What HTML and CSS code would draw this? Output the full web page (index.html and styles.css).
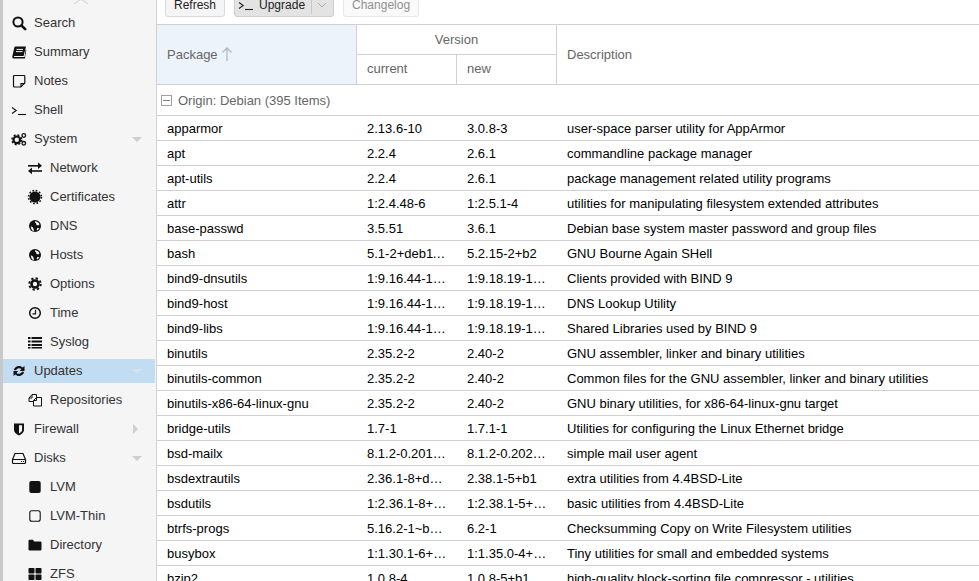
FILE: index.html
```html
<!DOCTYPE html>
<html lang="en">
<head>
<meta charset="utf-8">
<title>Updates</title>
<link rel="stylesheet" href="styles.css">
</head>
<body>
<svg class="defs" width="0" height="0" aria-hidden="true">
  <symbol id="i-search" viewBox="0 0 16 16"><circle cx="7" cy="7" r="4.6" fill="none" stroke="currentColor" stroke-width="2"/><path d="M10.4 10.4l3.8 3.8" stroke="currentColor" stroke-width="2.6" stroke-linecap="round"/></symbol>
  <symbol id="i-book" viewBox="0 0 16 16"><path d="M4.500 2.500H15l-2.400 9.600H3.600C3 12.100 2.800 12.800 3.200 13.100H13.600L14.600 5.500 15.300 6 13.900 14.500H2.700C1.500 14.500 1 13.200 1.400 12L3.300 3.600C3.500 2.900 3.900 2.500 4.500 2.500Z"/><path d="M5.500 5.400h6.500M5 7.600h6.500" stroke="#f5f5f5" stroke-width="1"/></symbol>
  <symbol id="i-note" viewBox="0 0 16 16"><path d="M3.500 2.500h9.500a.8.800 0 0 1 .8.800v6.700l-4 4H3.500a1 1 0 0 1-1-1V3.500a1 1 0 0 1 1-1Z" fill="none" stroke="currentColor" stroke-width="1.200"/><path d="M13.500 10.500h-3.500v3.500" fill="none" stroke="currentColor" stroke-width="1.200"/></symbol>
  <symbol id="i-term" viewBox="0 0 16 16"><path d="M1 5.500l4.200 3-4.200 3" fill="none" stroke="currentColor" stroke-width="1.100"/><path d="M7 12.500h8" stroke="currentColor" stroke-width="1.100"/></symbol>
  <symbol id="i-gears" viewBox="0 0 16 16"><circle cx="5.800" cy="8.800" r="3.300" fill="none" stroke="currentColor" stroke-width="2.200"/><circle cx="5.800" cy="8.800" r="4.900" fill="none" stroke="currentColor" stroke-width="1.400" stroke-dasharray="2 1.850"/><circle cx="12.800" cy="4.500" r="1.800" fill="none" stroke="currentColor" stroke-width="1.300"/><circle cx="12.800" cy="12.300" r="1.800" fill="none" stroke="currentColor" stroke-width="1.300"/></symbol>
  <symbol id="i-exchange" viewBox="0 0 16 16"><path d="M1 5h11V6.600H1Z"/><path d="M11 2.500l4 3.300-4 3.200Z"/><path d="M15 10.200H4V11.800H15Z"/><path d="M5 7.500l-4 3.500 4 3.200Z"/></symbol>
  <symbol id="i-cert" viewBox="0 0 16 16"><circle cx="8" cy="8" r="5.600"/><circle cx="8" cy="8" r="6.500" fill="none" stroke="currentColor" stroke-width="1.500" stroke-dasharray="1.700 1.700"/></symbol>
  <symbol id="i-globe" viewBox="0 0 16 16"><circle cx="8" cy="8" r="6"/><path d="M8 3.200c2 .1 3.800 1.300 4.500 3l-1.200 1.400-1.800-.6-.5-1.700L8 4.500ZM3.800 8.300 6 9.500l1 2.700-.4 1.100C5 12.800 3.900 10.800 3.800 8.300ZM10.300 10l2 .1-1.600 2.400-1.100-.9Z" fill="#f5f5f5"/></symbol>
  <symbol id="i-gear" viewBox="0 0 16 16"><circle cx="8" cy="8" r="3.500" fill="none" stroke="currentColor" stroke-width="2.600"/><circle cx="8" cy="8" r="5.700" fill="none" stroke="currentColor" stroke-width="2" stroke-dasharray="2.300 2.170"/></symbol>
  <symbol id="i-clock" viewBox="0 0 16 16"><circle cx="8" cy="8" r="5.300" fill="none" stroke="currentColor" stroke-width="1.500"/><path d="M8.500 4.800V8.800H5.500" fill="none" stroke="currentColor" stroke-width="1.200"/></symbol>
  <symbol id="i-list" viewBox="0 0 16 16"><path d="M1 3h2.500v2H1ZM4.500 3H15v2H4.500ZM1 6.500h2.500v2H1ZM4.500 6.500H15v2H4.500ZM1 10h2.500v2H1ZM4.500 10H15v2H4.500ZM1 13h2.500v1.500H1ZM4.500 13H15v1.500H4.500Z"/></symbol>
  <symbol id="i-sync" viewBox="0 0 16 16"><path d="M2.800 7C3.300 4.700 5.400 3 8 3c1.500 0 2.800.6 3.700 1.500L13.500 3v5H8.700l1.800-2A3.500 3.500 0 0 0 5 7.300Z"/><path d="M13.200 9c-.5 2.300-2.600 4-5.200 4-1.500 0-2.800-.6-3.700-1.500L2.500 13V8h4.800L5.500 10A3.500 3.500 0 0 0 11 8.700Z"/></symbol>
  <symbol id="i-files" viewBox="0 0 16 16"><path d="M6.500 8.500V14h8V5.500H9.500L6.500 8.500ZM6.500 8.500H9.500V5.500" fill="none" stroke="currentColor" stroke-width="1"/><path d="M6 9.500H2V6L5 2.500H9.500V5.500M5 3v3H2" fill="none" stroke="currentColor" stroke-width="1"/></symbol>
  <symbol id="i-shield" viewBox="0 0 16 16"><path d="M3 2.500h10v6.500c0 2.600-2.600 4.500-5 5.500-2.400-1-5-2.900-5-5.500Z"/><path d="M8 4.300h3.100V9c0 1.500-1.700 2.800-3.100 3.500Z" fill="#f5f5f5"/></symbol>
  <symbol id="i-hdd" viewBox="0 0 16 16"><path d="M1.500 9.500 4 3.500h8l2.500 6v3a1 1 0 0 1-1 1h-11a1 1 0 0 1-1-1ZM1.500 9.500h13" fill="none" stroke="currentColor" stroke-width="1.200"/><path d="M10 11.500h1M12 11.500h1" stroke="currentColor" stroke-width="1"/></symbol>
  <symbol id="i-solid" viewBox="0 0 16 16"><rect x="2.300" y="2" width="11.400" height="12" rx="2"/></symbol>
  <symbol id="i-square" viewBox="0 0 16 16"><rect x="2.800" y="2.800" width="10.400" height="10.400" rx="2" fill="none" stroke="currentColor" stroke-width="1.100"/></symbol>
  <symbol id="i-folder" viewBox="0 0 16 16"><path d="M1.500 4a1.200 1.200 0 0 1 1.200-1.200h3.100L7.300 4.500h6a1.200 1.200 0 0 1 1.200 1.200v6.600a1.200 1.200 0 0 1-1.200 1.200H2.700a1.200 1.200 0 0 1-1.200-1.200Z"/></symbol>
  <symbol id="i-grid" viewBox="0 0 16 16"><rect x="1.500" y="2" width="6" height="5.500" rx=".8"/><rect x="8.500" y="2" width="6" height="5.500" rx=".8"/><rect x="1.500" y="8.500" width="6" height="5.500" rx=".8"/><rect x="8.500" y="8.500" width="6" height="5.500" rx=".8"/></symbol>
</svg>

<div class="app">
  <nav class="sidebar">
    <svg class="scroll-up" width="16" height="4" viewBox="0 0 16 4" aria-hidden="true"><path d="M1 4l7-5 7 5" fill="none" stroke="#dcdcdc" stroke-width="1.500"/></svg>
    <div class="nav-item"><svg class="nav-icon"><use href="#i-search"/></svg><span>Search</span></div>
    <div class="nav-item"><svg class="nav-icon"><use href="#i-book"/></svg><span>Summary</span></div>
    <div class="nav-item"><svg class="nav-icon"><use href="#i-note"/></svg><span>Notes</span></div>
    <div class="nav-item"><svg class="nav-icon"><use href="#i-term"/></svg><span>Shell</span></div>
    <div class="nav-item"><svg class="nav-icon"><use href="#i-gears"/></svg><span>System</span><i class="arrow-down"></i></div>
    <div class="nav-item child"><svg class="nav-icon"><use href="#i-exchange"/></svg><span>Network</span></div>
    <div class="nav-item child"><svg class="nav-icon"><use href="#i-cert"/></svg><span>Certificates</span></div>
    <div class="nav-item child"><svg class="nav-icon"><use href="#i-globe"/></svg><span>DNS</span></div>
    <div class="nav-item child"><svg class="nav-icon"><use href="#i-globe"/></svg><span>Hosts</span></div>
    <div class="nav-item child"><svg class="nav-icon"><use href="#i-gear"/></svg><span>Options</span></div>
    <div class="nav-item child"><svg class="nav-icon"><use href="#i-clock"/></svg><span>Time</span></div>
    <div class="nav-item child"><svg class="nav-icon"><use href="#i-list"/></svg><span>Syslog</span></div>
    <div class="nav-item selected"><svg class="nav-icon"><use href="#i-sync"/></svg><span>Updates</span><i class="arrow-down"></i></div>
    <div class="nav-item child"><svg class="nav-icon"><use href="#i-files"/></svg><span>Repositories</span></div>
    <div class="nav-item"><svg class="nav-icon"><use href="#i-shield"/></svg><span>Firewall</span><i class="arrow-right"></i></div>
    <div class="nav-item"><svg class="nav-icon"><use href="#i-hdd"/></svg><span>Disks</span><i class="arrow-down"></i></div>
    <div class="nav-item child"><svg class="nav-icon"><use href="#i-solid"/></svg><span>LVM</span></div>
    <div class="nav-item child"><svg class="nav-icon"><use href="#i-square"/></svg><span>LVM-Thin</span></div>
    <div class="nav-item child"><svg class="nav-icon"><use href="#i-folder"/></svg><span>Directory</span></div>
    <div class="nav-item child"><svg class="nav-icon"><use href="#i-grid"/></svg><span>ZFS</span></div>
  </nav>

  <main class="main">
    <div class="toolbar">
      <button class="btn">Refresh</button>
      <button class="btn btn-split"><svg class="btn-icon"><use href="#i-term"/></svg><span>Upgrade</span><span class="split-sep"></span><svg class="caret" width="10" height="6" viewBox="0 0 10 6"><path d="M1 1l4 4 4-4" fill="none" stroke="#aaa" stroke-width="1"/></svg></button>
      <button class="btn btn-disabled">Changelog</button>
    </div>
    <table class="grid">
      <colgroup><col class="col-pkg"><col class="col-ver"><col class="col-ver"><col></colgroup>
      <thead>
        <tr class="head-top">
          <th rowspan="2" class="sorted"><span>Package</span><svg class="sort" width="12" height="16" viewBox="0 0 12 16"><path d="M6 15V2M1.500 6.500 6 2l4.500 4.500" fill="none" stroke="#b4b9bf" stroke-width="1.300"/></svg></th>
          <th colspan="2" class="center">Version</th>
          <th rowspan="2">Description</th>
        </tr>
        <tr class="head-sub"><th>current</th><th>new</th></tr>
      </thead>
      <tbody>
        <tr class="group"><td colspan="4"><i class="collapse"></i>Origin: Debian (395 Items)</td></tr>
        <tr><td>apparmor</td><td>2.13.6-10</td><td>3.0.8-3</td><td>user-space parser utility for AppArmor</td></tr>
        <tr><td>apt</td><td>2.2.4</td><td>2.6.1</td><td>commandline package manager</td></tr>
        <tr><td>apt-utils</td><td>2.2.4</td><td>2.6.1</td><td>package management related utility programs</td></tr>
        <tr><td>attr</td><td>1:2.4.48-6</td><td>1:2.5.1-4</td><td>utilities for manipulating filesystem extended attributes</td></tr>
        <tr><td>base-passwd</td><td>3.5.51</td><td>3.6.1</td><td>Debian base system master password and group files</td></tr>
        <tr><td>bash</td><td>5.1-2+deb11u1</td><td>5.2.15-2+b2</td><td>GNU Bourne Again SHell</td></tr>
        <tr><td>bind9-dnsutils</td><td>1:9.16.44-1~deb11u1</td><td>1:9.18.19-1~deb12u1</td><td>Clients provided with BIND 9</td></tr>
        <tr><td>bind9-host</td><td>1:9.16.44-1~deb11u1</td><td>1:9.18.19-1~deb12u1</td><td>DNS Lookup Utility</td></tr>
        <tr><td>bind9-libs</td><td>1:9.16.44-1~deb11u1</td><td>1:9.18.19-1~deb12u1</td><td>Shared Libraries used by BIND 9</td></tr>
        <tr><td>binutils</td><td>2.35.2-2</td><td>2.40-2</td><td>GNU assembler, linker and binary utilities</td></tr>
        <tr><td>binutils-common</td><td>2.35.2-2</td><td>2.40-2</td><td>Common files for the GNU assembler, linker and binary utilities</td></tr>
        <tr><td>binutils-x86-64-linux-gnu</td><td>2.35.2-2</td><td>2.40-2</td><td>GNU binary utilities, for x86-64-linux-gnu target</td></tr>
        <tr><td>bridge-utils</td><td>1.7-1</td><td>1.7.1-1</td><td>Utilities for configuring the Linux Ethernet bridge</td></tr>
        <tr><td>bsd-mailx</td><td>8.1.2-0.20180807cvs-2</td><td>8.1.2-0.20220412cvs-1</td><td>simple mail user agent</td></tr>
        <tr><td>bsdextrautils</td><td>2.36.1-8+deb11u1</td><td>2.38.1-5+b1</td><td>extra utilities from 4.4BSD-Lite</td></tr>
        <tr><td>bsdutils</td><td>1:2.36.1-8+deb11u1</td><td>1:2.38.1-5+b1</td><td>basic utilities from 4.4BSD-Lite</td></tr>
        <tr><td>btrfs-progs</td><td>5.16.2-1~bpo11+1</td><td>6.2-1</td><td>Checksumming Copy on Write Filesystem utilities</td></tr>
        <tr><td>busybox</td><td>1:1.30.1-6+b3</td><td>1:1.35.0-4+b3</td><td>Tiny utilities for small and embedded systems</td></tr>
        <tr><td>bzip2</td><td>1.0.8-4</td><td>1.0.8-5+b1</td><td>high-quality block-sorting file compressor - utilities</td></tr>
      </tbody>
    </table>
  </main>
</div>
</body>
</html>
```
FILE: styles.css
```css
* { box-sizing: border-box; }
html, body { margin: 0; height: 100%; overflow: hidden; background: #fff; }
body { font: 13px/16px "Liberation Sans", Arial, sans-serif; color: #000; }
.defs { display: block; }

.app { display: flex; height: 581px; overflow: hidden; border-left: 3px solid #c9c9c9; }

.sidebar {
  position: relative;
  flex: 0 0 154px;
  display: flex;
  flex-direction: column;
  gap: 5px;
  padding-top: 11px;
  overflow: hidden;
  background: #f5f5f5;
  border-right: 1px solid #d0d0d0;
  color: #333;
}
.scroll-up { position: absolute; left: 70px; top: 0; }
.nav-item {
  flex: 0 0 24px;
  display: flex;
  align-items: center;
  padding-left: 8px;
}
.nav-item.child { padding-left: 24px; }
.nav-item.selected { background: #c2ddf2; margin-right: 1px; }
.nav-icon { flex: 0 0 16px; width: 16px; height: 16px; margin-right: 7px; color: #111; fill: currentColor; }
.arrow-down, .arrow-right { margin-left: auto; width: 0; height: 0; border-style: solid; }
.arrow-down { margin-right: 14px; border-width: 5px 5px 0; border-color: #cfcfcf transparent transparent; }
.selected .arrow-down { margin-right: 13px; border-top-color: #d3e1ec; }
.arrow-right { margin-right: 18px; border-width: 5px 0 5px 5px; border-color: transparent transparent transparent #cfcfcf; }

.main { flex: 1 1 auto; min-width: 0; display: flex; flex-direction: column; overflow: hidden; }

.toolbar {
  flex: 0 0 25px;
  min-height: 0;
  display: flex;
  align-items: flex-end;
  gap: 9px;
  padding: 0 0 7px 8px;
  border-bottom: 1px solid #d0d0d0;
}
.btn {
  flex: none;
  height: 24px;
  padding: 0 8px;
  font: 12px/16px "Liberation Sans", Arial, sans-serif;
  color: #222;
  background: #f5f5f5;
  border: 1px solid #d9d9d9;
  border-radius: 3px;
  display: flex;
  align-items: center;
}
.btn-split { width: 100px; padding: 0 6px 0 3px; background: #e3e3e3; border-color: #cfcfcf; }
.btn-icon { width: 16px; height: 16px; margin-right: 5px; color: #222; flex: none; }
.split-sep { width: 1px; height: 18px; margin: 0 5px 0 6px; background: #c8c8c8; flex: none; }
.caret { flex: none; }
.btn-disabled { color: #8f8f8f; background: #fafafa; border-color: #e8e8e8; }

.grid { width: 100%; table-layout: fixed; border-collapse: separate; border-spacing: 0; }
.col-pkg { width: 200px; }
.col-ver { width: 100px; }

.grid th {
  padding: 0 10px;
  font-weight: 400;
  text-align: left;
  color: #666;
  border-right: 1px solid #d0d0d0;
  border-bottom: 1px solid #d0d0d0;
}
.grid th:last-child { border-right: 0; }
.head-top th { height: 30px; }
.head-sub th { height: 30px; padding-bottom: 2px; }
.head-sub th:last-child { border-right: 1px solid #d0d0d0; }
.grid th.center { text-align: center; }
.grid th.sorted { background: #ecf3fb; }
.sort { vertical-align: -3px; margin-left: 3px; }

.grid td {
  height: 25px;
  padding: 2px 10px 0;
  white-space: nowrap;
  overflow: hidden;
  text-overflow: ellipsis;
  border-bottom: 1px solid #d0d0d0;
}
.grid .group td { height: 31px; padding-left: 4px; color: #666; }
.collapse {
  display: inline-block;
  position: relative;
  width: 11px;
  height: 11px;
  margin-right: 6px;
  vertical-align: -1px;
  border: 1px solid #a0a0a0;
}
.collapse::after { content: ""; position: absolute; left: 1px; right: 1px; top: 4px; height: 1px; background: #808080; }
```
